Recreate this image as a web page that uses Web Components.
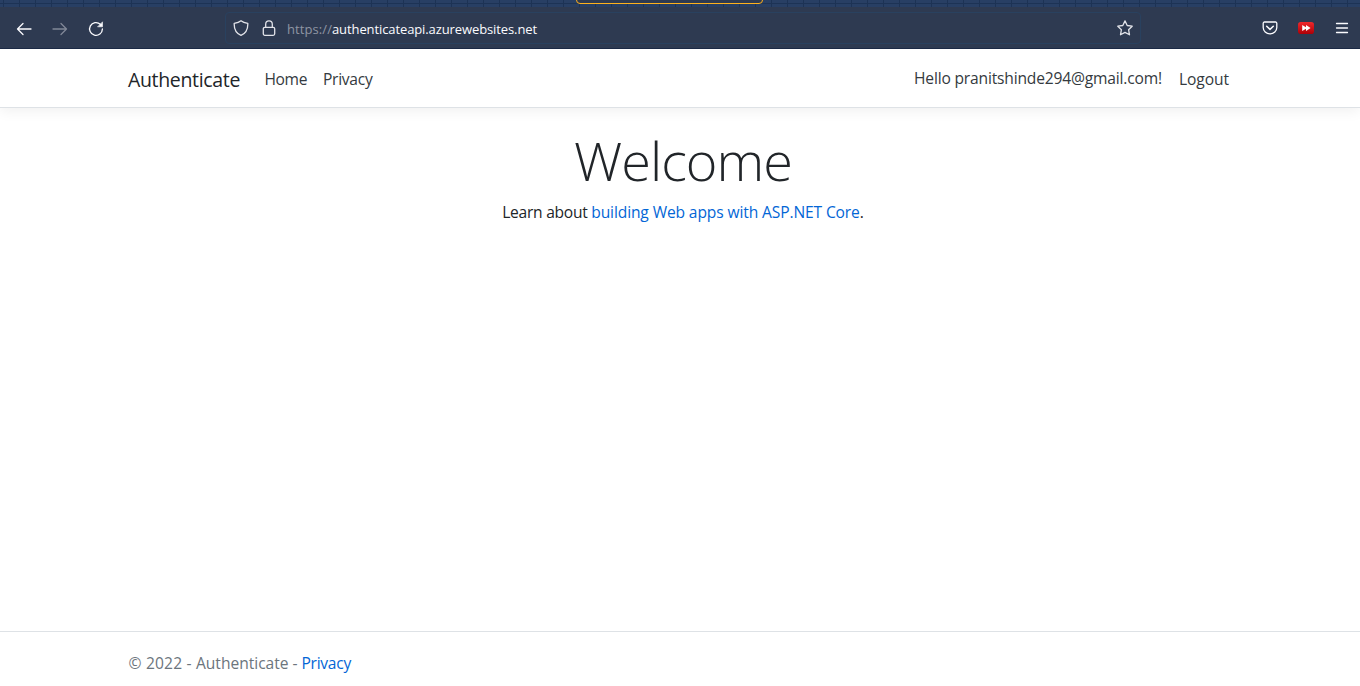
<!DOCTYPE html>
<html lang="en">
<head>
<meta charset="utf-8">
<title>Home Page - Authenticate</title>
<style>
html,body{margin:0;height:100%;overflow:hidden;background:#fff}
body{font:400 15.6px/24px "Open Sans","Noto Sans",sans-serif;color:#212529}
</style>
</head>
<body>
<app-window></app-window>
<script>
const define = (name, html, ready) => customElements.define(name, class extends HTMLElement {
  connectedCallback() {
    if (this.shadowRoot) return;
    const t = document.createElement('template');
    t.innerHTML = html;
    this.attachShadow({mode: 'open'}).append(t.content.cloneNode(true));
    if (ready) ready(this);
  }
});

/* Text run tracked so that it fills the width given in its attribute. */
define('fit-text', `<style>:host{display:inline-block;white-space:pre}span{display:inline-block;white-space:pre}</style><span><slot></slot></span>`, el => {
  const w = parseFloat(el.getAttribute('width'));
  const s = el.shadowRoot.querySelector('span');
  const n = [...el.textContent].length;
  s.style.letterSpacing = (w - s.getBoundingClientRect().width) / n + 'px';
});

define('browser-bar', `<style>
:host{display:flex;flex-direction:column;height:49px;flex:none;box-sizing:border-box;position:relative;background:#2e3a51;border-bottom:1px solid #1b2945;color:#fbfbfe}
.theme{height:7px;flex:none;background:linear-gradient(#1d3355,#1d3355) 0 3px/100% 1px no-repeat,repeating-linear-gradient(90deg,#283f64 0 3px,#1d3355 3px 4px,#283f64 4px 16px)}
.tab{position:absolute;left:576px;top:-8px;width:187px;height:12px;box-sizing:border-box;border:1px solid #ffb11b;border-radius:4px;background:#2e3a51}
.row{flex:1;display:flex;align-items:center;padding-top:1px}
svg{display:block;flex:none;width:16px;height:16px;fill:none;stroke:currentColor;stroke-width:1.3;stroke-linecap:round;stroke-linejoin:round}
.nav{display:flex;gap:20px;padding:1px 0 0 16px;width:209px;box-sizing:content-box}
.dim{opacity:.4}
.url{display:flex;align-items:center;box-sizing:border-box;width:916px;height:32px;border:1px solid #29415f;border-radius:4px;padding:0 7px}
.url svg{opacity:.88}
.lock{margin-left:12px}
.addr{font-size:13px;line-height:20px;margin-left:10px;flex:1;padding-top:2px;white-space:nowrap}
.scheme{color:#8e95a3}
.tools{display:flex;gap:20px;margin-left:121px}
</style>
<div class="theme"></div><div class="tab"></div>
<div class="row">
 <div class="nav">
  <svg viewBox="0 0 16 16"><path d="M15 8H1.5M7 2.5 1.5 8 7 13.500"/></svg>
  <svg class="dim" viewBox="0 0 16 16"><path d="M1 8h13.500M9 2.500 14.500 8 9 13.500"/></svg>
  <svg viewBox="0 0 16 16"><path d="M12.300 3.200A6.400 6.400 0 1 0 14.400 8"/><path d="M14.500 1.200v4.600H9.900z" fill="currentColor" stroke-width=".6"/></svg>
 </div>
 <div class="url">
  <svg viewBox="0 0 16 16"><path d="M8 .8C6.300 2.200 3.700 3 1.200 3.400 1 8.500 3.100 13.300 8 15.400c4.900-2.100 7-6.900 6.800-12C12.300 3 9.700 2.200 8 .8z"/></svg>
  <svg class="lock" viewBox="0 0 16 16"><rect x="2.300" y="7.300" width="11.400" height="8" rx="1.500"/><path d="M4.700 7V4.200a3.300 3.300 0 0 1 6.600 0V7"/></svg>
  <span class="addr"><fit-text class="scheme" width="45">https://</fit-text><fit-text width="205">authenticateapi.azurewebsites.net</fit-text></span>
  <svg viewBox="0 0 16 16"><path d="m8 .9 2.200 4.600 5 .7-3.600 3.500.9 5.100L8 12.400l-4.500 2.400.9-5.100L.8 6.200l5-.7z"/></svg>
 </div>
 <div class="tools">
  <svg viewBox="0 0 16 16"><path d="M2.500 2h11a1.300 1.300 0 0 1 1.300 1.300V7.500a6.800 6.300 0 0 1-13.600 0V3.300A1.300 1.300 0 0 1 2.500 2z"/><path d="M4.700 6.300 8 9.400l3.300-3.100" stroke-width="1.500"/></svg>
  <svg viewBox="0 0 16 16"><defs><linearGradient id="r" x2="0" y2="1"><stop stop-color="#f0282c"/><stop offset="1" stop-color="#ad0006"/></linearGradient></defs><rect y="2" width="16" height="12" rx="2.800" fill="url(#r)" stroke="none"/><path d="M4.200 5 8 7.200V5L12.600 8 8 11V8.800L4.200 11z" fill="#fff" stroke="none"/></svg>
  <svg viewBox="0 0 16 16"><path d="M2.500 3.500h11M2.500 8h11M2.500 12.500h11" stroke-width="1.300"/></svg>
 </div>
</div>`);

define('site-nav', `<style>
:host{display:flex;flex:none;box-sizing:border-box;height:59px;padding:0 131px 1px 128px;align-items:center;background:#fff;border-bottom:1px solid #dee2e6;box-shadow:0 4px 12px rgba(0,0,0,.055);color:#343a40}
.brand{font-size:19.500px;line-height:30px;color:#212529;margin-right:24.500px;padding-top:5px}
.link{margin-right:16px;padding-top:3px}
.user{margin-left:auto;margin-right:17px;padding-top:1px}
.out{padding-top:3px}
</style>
<fit-text class="brand" width="112">Authenticate</fit-text>
<fit-text class="link" width="42.500">Home</fit-text>
<fit-text class="link" width="49.500">Privacy</fit-text>
<fit-text class="user" width="248">Hello pranitshinde294@gmail.com!</fit-text>
<fit-text class="out" width="50">Logout</fit-text>`);

define('welcome-panel', `<style>
:host{display:flex;flex-direction:column;align-items:center;flex:1;padding:22px 0 0 6px}
h1{font-size:54px;font-weight:300;line-height:60px;margin:0}
h1 fit-text{display:block}
p{margin:10px 0 0}
a{color:#0366d6}
</style>
<h1><fit-text width="218">Welcome</fit-text></h1>
<p><fit-text width="89">Learn about </fit-text><a><fit-text width="268.500">building Web apps with ASP.NET Core</fit-text></a><fit-text width="4">.</fit-text></p>`);

define('site-footer', `<style>
:host{display:block;flex:none;box-sizing:border-box;height:55px;padding:19px 128.500px 0;border-top:1px solid #dee2e6;color:#6c757d;white-space:nowrap}
a{color:#0366d6}
</style><fit-text width="67.500">© 2022 - </fit-text><fit-text width="105.500">Authenticate - </fit-text><a><fit-text width="49.500">Privacy</fit-text></a>`);

define('app-window', `<style>:host{display:flex;flex-direction:column;width:100%;height:100vh}</style>
<browser-bar></browser-bar><site-nav></site-nav><welcome-panel></welcome-panel><site-footer></site-footer>`);
</script>
</body>
</html>
